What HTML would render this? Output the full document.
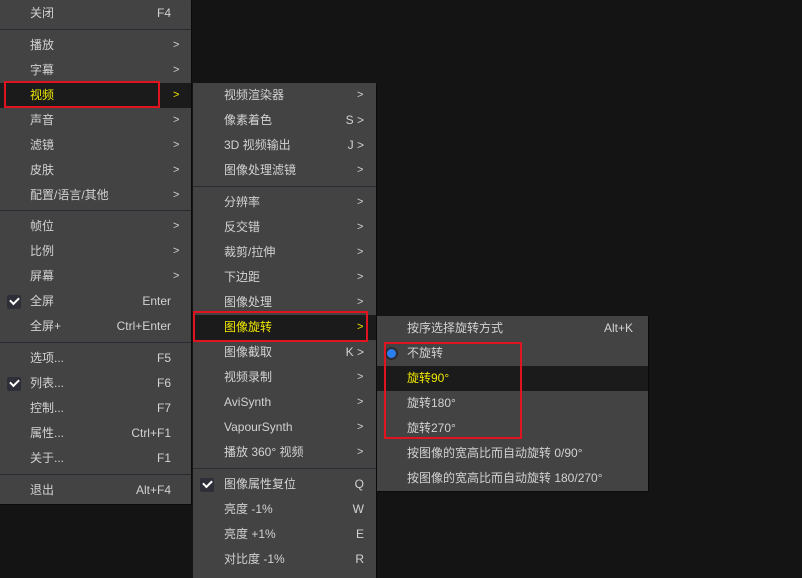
<!DOCTYPE html>
<html><head><meta charset="utf-8"><style>
*{margin:0;padding:0;box-sizing:border-box}
body{width:802px;height:573px;background:#141414;overflow:hidden;position:relative;font-family:"Liberation Sans","Noto Sans CJK SC",sans-serif;font-size:12px;color:#d2d2d2}
.m{position:absolute;background:#434343;box-shadow:1px 1px 0 #0a0a0a}
.r{position:relative;height:25px;line-height:25px}
.r .t{position:absolute;top:0}
.r .k{position:absolute;top:0;text-align:right}
.r .a{position:absolute;top:0;font-size:11px}
.s{height:1px;background:#2b2b33;margin:3px 0 3px 0}
.h{background:#1b1b1b;color:#f0e800}
.ck{position:absolute;left:7px;top:6px;width:14px;height:14px;background:#2e2e38;border-radius:2px}
.ck:after{content:"";position:absolute;left:3px;top:2px;width:7px;height:4px;border-left:2px solid #fff;border-bottom:2px solid #fff;transform:rotate(-45deg)}
.rb{position:absolute;border:2px solid #e0141e}
#m1 .t{left:30px}#m1 .k{right:20px}#m1 .a{left:173px}
#m2 .t{left:31px}#m2 .k{right:12px}#m2 .a{left:164px}
#m3 .t{left:30px}#m3 .k{right:15px}
.dot{position:absolute;left:10px;top:8px;width:9px;height:9px;border-radius:50%;background:#2a7ff0;box-shadow:0 0 0 2px #2c2c30}
</style></head><body>
<div class="m" id="m1" style="left:0;top:0;width:191px;height:504px;padding-top:1px">
<div class="r"><span class="t">关闭</span><span class="k">F4</span></div>
<div class="s"></div>
<div class="r"><span class="t">播放</span><span class="a">&gt;</span></div>
<div class="r"><span class="t">字幕</span><span class="a">&gt;</span></div>
<div class="r h"><span class="t">视频</span><span class="a">&gt;</span></div>
<div class="r"><span class="t">声音</span><span class="a">&gt;</span></div>
<div class="r"><span class="t">滤镜</span><span class="a">&gt;</span></div>
<div class="r"><span class="t">皮肤</span><span class="a">&gt;</span></div>
<div class="r"><span class="t">配置/语言/其他</span><span class="a">&gt;</span></div>
<div class="s" style="margin-top:2px"></div>
<div class="r"><span class="t">帧位</span><span class="a">&gt;</span></div>
<div class="r"><span class="t">比例</span><span class="a">&gt;</span></div>
<div class="r"><span class="t">屏幕</span><span class="a">&gt;</span></div>
<div class="r"><i class="ck"></i><span class="t">全屏</span><span class="k">Enter</span></div>
<div class="r"><span class="t">全屏+</span><span class="k">Ctrl+Enter</span></div>
<div class="s"></div>
<div class="r"><span class="t">选项...</span><span class="k">F5</span></div>
<div class="r"><i class="ck"></i><span class="t">列表...</span><span class="k">F6</span></div>
<div class="r"><span class="t">控制...</span><span class="k">F7</span></div>
<div class="r"><span class="t">属性...</span><span class="k">Ctrl+F1</span></div>
<div class="r"><span class="t">关于...</span><span class="k">F1</span></div>
<div class="s"></div>
<div class="r"><span class="t">退出</span><span class="k">Alt+F4</span></div>
</div>
<div class="rb" style="left:4px;top:81px;width:156px;height:27px"></div>

<div class="m" id="m2" style="left:193px;top:83px;width:183px;height:495px">
<div class="r"><span class="t">视频渲染器</span><span class="a">&gt;</span></div>
<div class="r"><span class="t">像素着色</span><span class="k">S &gt;</span></div>
<div class="r"><span class="t">3D 视频输出</span><span class="k">J &gt;</span></div>
<div class="r"><span class="t">图像处理滤镜</span><span class="a">&gt;</span></div>
<div class="s"></div>
<div class="r"><span class="t">分辨率</span><span class="a">&gt;</span></div>
<div class="r"><span class="t">反交错</span><span class="a">&gt;</span></div>
<div class="r"><span class="t">裁剪/拉伸</span><span class="a">&gt;</span></div>
<div class="r"><span class="t">下边距</span><span class="a">&gt;</span></div>
<div class="r"><span class="t">图像处理</span><span class="a">&gt;</span></div>
<div class="r h"><span class="t">图像旋转</span><span class="a">&gt;</span></div>
<div class="r"><span class="t">图像截取</span><span class="k">K &gt;</span></div>
<div class="r"><span class="t">视频录制</span><span class="a">&gt;</span></div>
<div class="r"><span class="t">AviSynth</span><span class="a">&gt;</span></div>
<div class="r"><span class="t">VapourSynth</span><span class="a">&gt;</span></div>
<div class="r"><span class="t">播放 360° 视频</span><span class="a">&gt;</span></div>
<div class="s"></div>
<div class="r"><i class="ck"></i><span class="t">图像属性复位</span><span class="k">Q</span></div>
<div class="r"><span class="t">亮度 -1%</span><span class="k">W</span></div>
<div class="r"><span class="t">亮度 +1%</span><span class="k">E</span></div>
<div class="r"><span class="t">对比度 -1%</span><span class="k">R</span></div>
</div>
<div class="rb" style="left:193px;top:311px;width:175px;height:31px"></div>

<div class="m" id="m3" style="left:377px;top:316px;width:271px;height:175px">
<div class="r"><span class="t">按序选择旋转方式</span><span class="k">Alt+K</span></div>
<div class="r"><i class="dot"></i><span class="t">不旋转</span></div>
<div class="r h"><span class="t">旋转90°</span></div>
<div class="r"><span class="t">旋转180°</span></div>
<div class="r"><span class="t">旋转270°</span></div>
<div class="r"><span class="t">按图像的宽高比而自动旋转 0/90°</span></div>
<div class="r"><span class="t">按图像的宽高比而自动旋转 180/270°</span></div>
</div>
<div class="rb" style="left:384px;top:342px;width:138px;height:97px"></div>
</body></html>
